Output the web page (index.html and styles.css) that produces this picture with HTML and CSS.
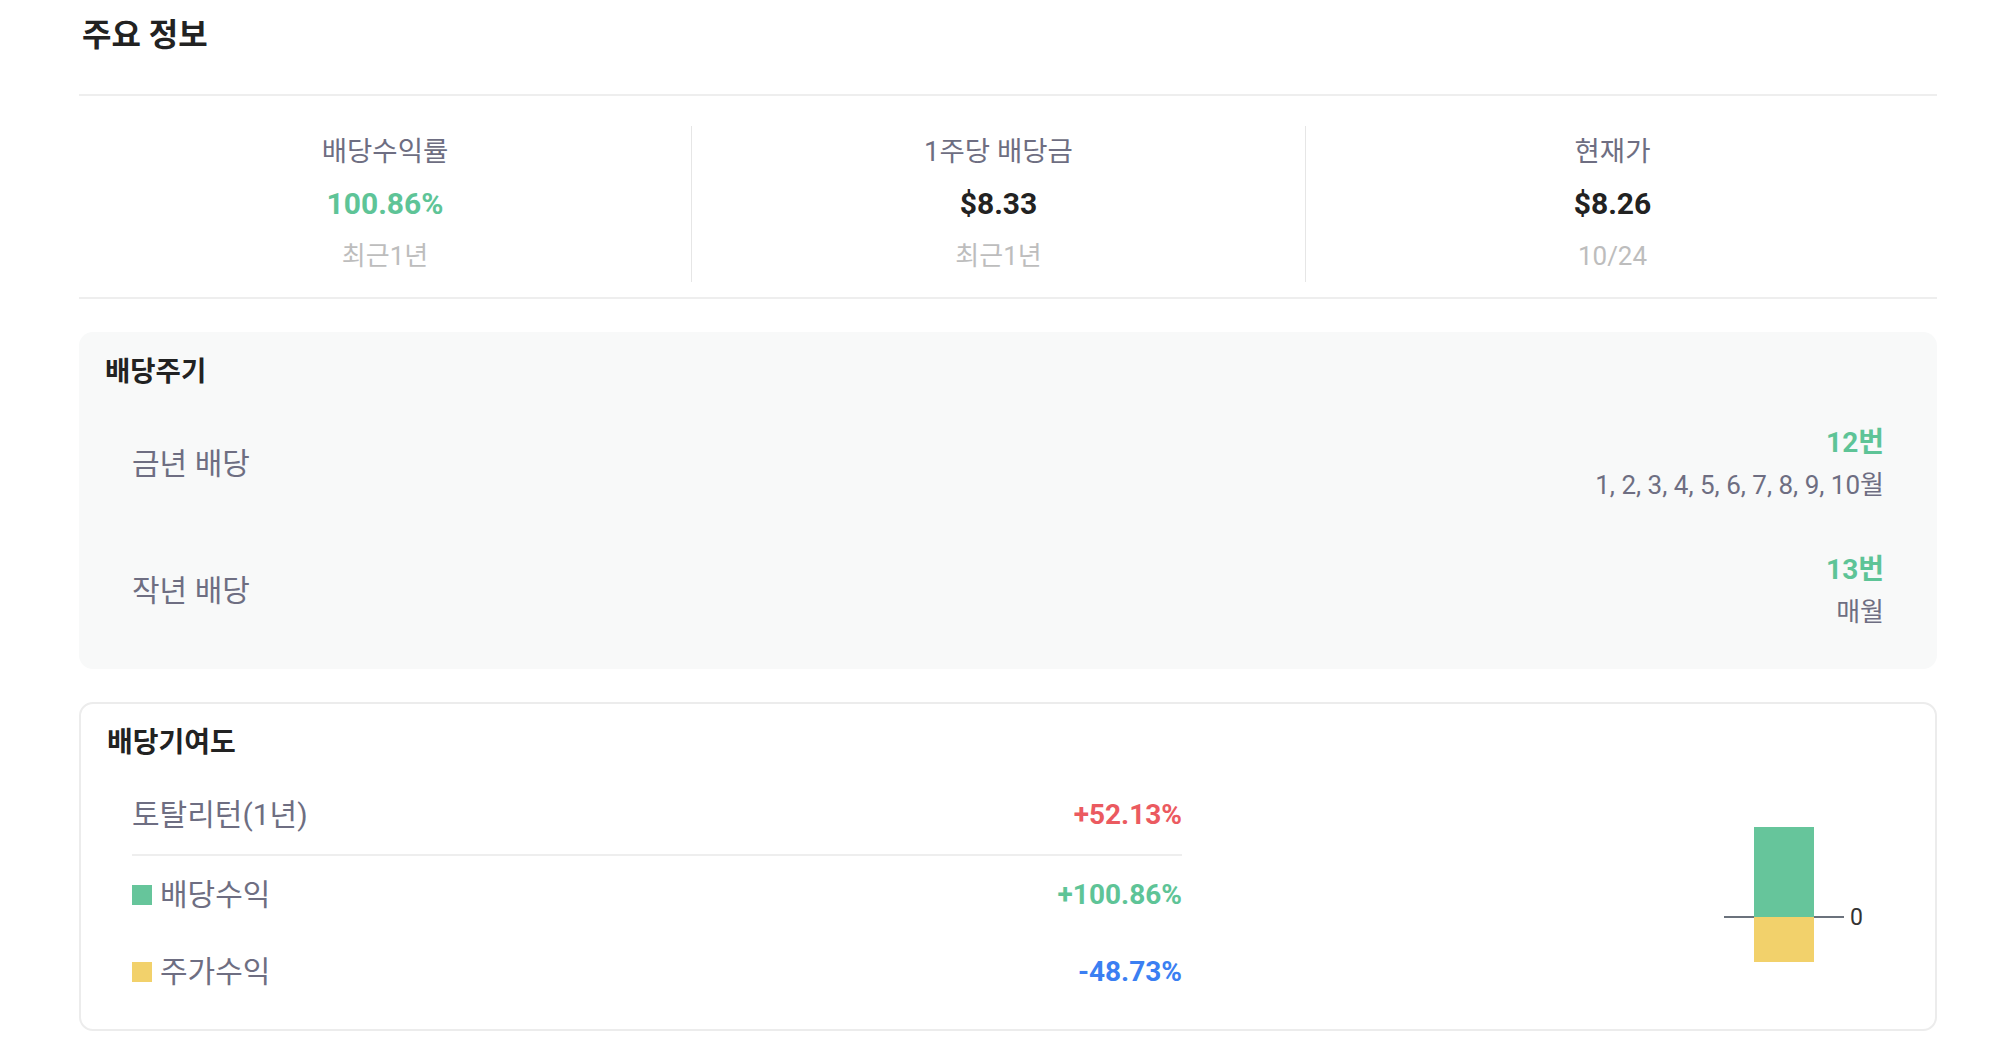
FILE: index.html
```html
<!DOCTYPE html>
<html lang="ko">
<head>
<meta charset="utf-8">
<title>주요 정보</title>
<link rel="stylesheet" href="styles.css">
</head>
<body>
<div class="page">
  <h2 class="title">주요 정보</h2>

  <div class="stats">
    <div class="stat">
      <div class="stat-label">배당수익률</div>
      <div class="stat-value green">100.86%</div>
      <div class="stat-sub">최근1년</div>
    </div>
    <div class="stat">
      <div class="stat-label">1주당 배당금</div>
      <div class="stat-value">$8.33</div>
      <div class="stat-sub">최근1년</div>
    </div>
    <div class="stat">
      <div class="stat-label">현재가</div>
      <div class="stat-value">$8.26</div>
      <div class="stat-sub">10/24</div>
    </div>
  </div>

  <section class="cycle">
    <h3 class="box-title">배당주기</h3>
    <div class="cycle-row">
      <span class="row-label">금년 배당</span>
      <div class="cycle-info">
        <div class="count">12번</div>
        <div class="months">1, 2, 3, 4, 5, 6, 7, 8, 9, 10월</div>
      </div>
    </div>
    <div class="cycle-row">
      <span class="row-label">작년 배당</span>
      <div class="cycle-info">
        <div class="count">13번</div>
        <div class="months">매월</div>
      </div>
    </div>
  </section>

  <section class="contrib">
    <div class="contrib-main">
      <h3 class="box-title">배당기여도</h3>
      <div class="contrib-list">
        <div class="c-row total">
          <span class="row-label">토탈리턴(1년)</span>
          <span class="c-val red">+52.13%</span>
        </div>
        <div class="c-row">
          <span class="row-label"><i class="sw sw-green"></i>배당수익</span>
          <span class="c-val green">+100.86%</span>
        </div>
        <div class="c-row">
          <span class="row-label"><i class="sw sw-yellow"></i>주가수익</span>
          <span class="c-val blue">-48.73%</span>
        </div>
      </div>
    </div>
    <svg class="chart" width="150" height="150" viewBox="0 0 150 150">
      <line x1="4" y1="97" x2="124" y2="97" stroke="#3a4350" stroke-width="1.6"/>
      <rect x="34" y="7" width="60" height="90" fill="#66c59b"/>
      <rect x="34" y="97" width="60" height="45" fill="#f2d16b"/>
      <text x="130" y="105" font-family="Roboto, sans-serif" font-size="23" fill="#333">0</text>
    </svg>
  </section>
</div>
</body>
</html>
```

FILE: styles.css
```css
* { box-sizing: border-box; }

body {
  margin: 0;
  background: #ffffff;
  font-family: Roboto, "Noto Sans CJK KR", sans-serif;
  color: #222;
}

.page {
  width: 1858px;
  margin-left: 79px;
}

.title {
  margin: 0;
  height: 94px;
  padding: 15px 0 0 3px;
  font-size: 32px;
  line-height: 40px;
  font-weight: 700;
  color: #222;
}

.stats {
  display: grid;
  grid-template-columns: 612px 614px 614px;
  border-top: 2px solid #eeeeee;
  border-bottom: 2px solid #eeeeee;
  padding: 30px 0 15px;
}

.stat {
  height: 156px;
  display: flex;
  flex-direction: column;
  align-items: center;
}

.stat + .stat {
  border-left: 1px solid #e6e6e6;
}

.stat-label {
  font-size: 27.5px;
  line-height: 52px;
  color: #6e6e82;
}

.stat-value {
  font-size: 30px;
  line-height: 52px;
  font-weight: 700;
  color: #222;
}

.stat-sub {
  font-size: 26px;
  line-height: 52px;
  color: #bdbdbd;
}

.green { color: #5ec497 !important; }
.red { color: #eb5a60; }
.blue { color: #3b7ff2; }

.cycle {
  margin-top: 33px;
  background: #f8f9f9;
  border-radius: 14px;
  padding: 26px 26px 15px;
}

.box-title {
  margin: 0 0 14px;
  font-size: 27.5px;
  line-height: 28px;
  font-weight: 700;
  color: #222;
}

.cycle-row {
  height: 127px;
  padding: 0 27px;
  display: flex;
  justify-content: space-between;
  align-items: center;
}

.row-label {
  font-size: 30px;
  line-height: 40px;
  color: #6e6e82;
  display: flex;
  align-items: center;
}

.cycle-info {
  text-align: right;
}

.count {
  font-size: 28px;
  line-height: 43px;
  font-weight: 700;
  color: #5ec497;
}

.months {
  font-size: 26px;
  line-height: 43px;
  color: #6e6e82;
}

.contrib {
  margin-top: 33px;
  border: 2px solid #ececec;
  border-radius: 14px;
  padding: 25px 0 19px 26px;
  display: flex;
}

.contrib .box-title {
  margin-bottom: 18px;
  font-size: 28px;
}

.contrib-list {
  margin-left: 25px;
  width: 1050px;
}

.c-row {
  height: 77px;
  display: flex;
  justify-content: space-between;
  align-items: center;
}

.c-row.total {
  height: 81px;
  border-bottom: 2px solid #eeeeee;
}

.c-val {
  font-size: 28px;
  font-weight: 700;
}

.sw {
  display: inline-block;
  width: 20px;
  height: 20px;
  margin-right: 8px;
}

.sw-green { background: #66c59b; }
.sw-yellow { background: #f2d16b; }

.chart {
  display: block;
  margin-left: auto;
  margin-right: 65px;
  align-self: flex-end;
  margin-bottom: 40px;
}
```
